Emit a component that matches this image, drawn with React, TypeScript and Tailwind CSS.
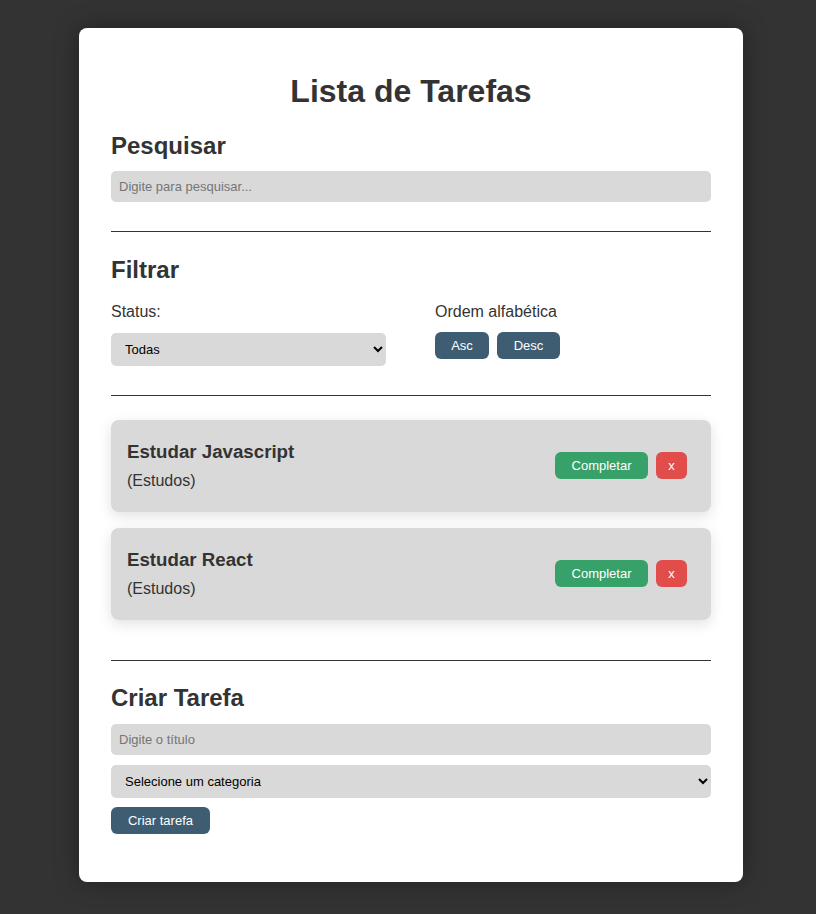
import { useState } from 'react';

type Tarefa = {
  id: number;
  titulo: string;
  categoria: string;
};

const tarefasIniciais: Tarefa[] = [
  { id: 1, titulo: 'Estudar Javascript', categoria: 'Estudos' },
  { id: 2, titulo: 'Estudar React', categoria: 'Estudos' },
];

const btnAzul = 'h-[27px] rounded-md bg-[#3e5d73] text-[13px] text-white';

export default function App() {
  const [tarefas] = useState<Tarefa[]>(tarefasIniciais);

  return (
    <div className="flex min-h-screen justify-center bg-[#333333] pt-[28px] pb-8 pl-[6px] font-['Liberation_Sans',Arial,sans-serif] text-[#333]">
      <div className="h-fit w-[664px] rounded-lg bg-white px-8 pt-[45px] pb-[48px] shadow-[0_0_24px_rgba(0,0,0,0.35)]">
        <h1 className="text-center text-[32px] font-bold leading-[37px]">Lista de Tarefas</h1>

        {/* Pesquisar */}
        <h2 className="mt-[22px] text-[24px] font-bold leading-[28px]">Pesquisar</h2>
        <input
          type="text"
          placeholder="Digite para pesquisar..."
          className="mt-[11px] block h-[31px] w-full rounded-[5px] bg-[#d9d9d9] px-2 text-[13px] outline-none placeholder:text-[#757575]"
        />

        <hr className="mt-[29px] border-t border-[#333]" />

        {/* Filtrar */}
        <h2 className="mt-[24px] text-[24px] font-bold leading-[28px]">Filtrar</h2>
        <div className="mt-[19px] flex">
          <div className="w-[324px]">
            <p className="text-[16px] leading-[18px]">Status:</p>
            <select className="mt-[12px] block h-[33px] w-[275px] rounded-[5px] bg-[#d9d9d9] px-[10px] text-[13px] text-black outline-none">
              <option>Todas</option>
              <option>Completas</option>
              <option>Incompletas</option>
            </select>
          </div>
          <div>
            <p className="text-[16px] leading-[18px]">Ordem alfabética</p>
            <div className="mt-[11px] flex gap-2">
              <button className={`${btnAzul} w-[54px]`}>Asc</button>
              <button className={`${btnAzul} w-[63px]`}>Desc</button>
            </div>
          </div>
        </div>

        <hr className="mt-[29px] border-t border-[#333]" />

        {/* Lista */}
        <div className="mt-[24px] flex flex-col gap-4">
          {tarefas.map((t) => (
            <div
              key={t.id}
              className="flex h-[92px] items-center justify-between rounded-lg bg-[#d9d9d9] pl-4 pr-6 shadow-[0_4px_14px_rgba(0,0,0,0.12)]"
            >
              <div className="mb-[2px]">
                <p className="text-[18.7px] font-bold leading-[22px]">{t.titulo}</p>
                <p className="mt-[9px] text-[16px] leading-[18px]">({t.categoria})</p>
              </div>
              <div className="mb-[1px] flex gap-2">
                <button className="h-[27px] w-[93px] rounded-md bg-[#38a169] text-[13px] text-white">
                  Completar
                </button>
                <button className="h-[27px] w-[31px] rounded-md bg-[#e04d4b] text-[13px] text-white">
                  x
                </button>
              </div>
            </div>
          ))}
        </div>

        <hr className="mt-[40px] border-t border-[#333]" />

        {/* Criar */}
        <h2 className="mt-[23px] text-[24px] font-bold leading-[28px]">Criar Tarefa</h2>
        <input
          type="text"
          placeholder="Digite o título"
          className="mt-[12px] block h-[31px] w-full rounded-[5px] bg-[#d9d9d9] px-2 text-[13px] outline-none placeholder:text-[#757575]"
        />
        <select className="mt-[10px] block h-[33px] w-full rounded-[5px] bg-[#d9d9d9] px-[10px] text-[13px] text-black outline-none">
          <option>Selecione um categoria</option>
          <option>Trabalho</option>
          <option>Pessoal</option>
          <option>Estudos</option>
        </select>
        <button className="mt-[9px] h-[27px] w-[99px] rounded-md bg-[#3e5d73] text-[13px] text-white">
          Criar tarefa
        </button>
      </div>
    </div>
  );
}
